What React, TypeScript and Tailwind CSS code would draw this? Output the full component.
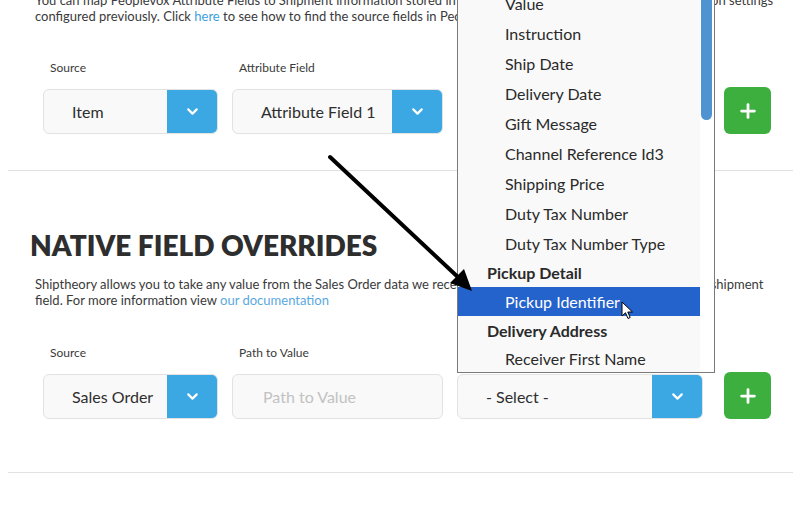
import React from "react";
import { ChevronDown, Plus } from "lucide-react";

type Opt = { label: string; group?: boolean; active?: boolean; h?: string };

const options: Opt[] = [
  { label: "Value" },
  { label: "Instruction" },
  { label: "Ship Date" },
  { label: "Delivery Date" },
  { label: "Gift Message" },
  { label: "Channel Reference Id3" },
  { label: "Shipping Price" },
  { label: "Duty Tax Number" },
  { label: "Duty Tax Number Type" },
  { label: "Pickup Detail", group: true, h: "h-[28px]" },
  { label: "Pickup Identifier", active: true, h: "h-[29px]" },
  { label: "Delivery Address", group: true, h: "h-[29px]" },
  { label: "Receiver First Name", h: "h-[28px]" },
];

function SelectBox({ value, width }: { value: string; width: string }) {
  return (
    <div className={`${width} h-[45px] flex rounded-[6px] border border-[#e2e2e2] bg-[#f9f9f9] overflow-hidden`}>
      <div className="flex-1 flex items-center pl-[28px] text-[16px] text-[#2e2e2e]">{value}</div>
      <div className="w-[51px] -my-px -mr-px bg-[#3ba8e3] flex items-center justify-center text-white">
        <ChevronDown size={17} strokeWidth={3} />
      </div>
    </div>
  );
}

function Field({ label, children }: { label: string; children: React.ReactNode }) {
  return (
    <div className="flex flex-col">
      <div className="pl-[7px] text-[12px] leading-4 text-[#3a3a3a] h-4">{label}</div>
      <div className="mt-[13px]">{children}</div>
    </div>
  );
}

function AddButton() {
  return (
    <div className="ml-[21px] -mt-[2px] w-[47px] h-[47px] rounded-[6px] bg-[#3daf3f] flex items-center justify-center text-white">
      <Plus size={22} strokeWidth={3} />
    </div>
  );
}

export default function App() {
  return (
    <div className="relative w-[793px] h-[511px] overflow-hidden bg-white text-[#333] font-['Lato',sans-serif]">
      <p className="-mt-2 pl-[35px] text-[13px] leading-4 text-[#3a3a3a] whitespace-nowrap">
        You can map Peoplevox Attribute Fields to Shipment information stored in Shiptheory. This overrides any Shipping Option settings
        <br />
        configured previously. Click <span className="text-[#3aa0e0]">here</span> to see how to find the source fields in Peoplevox.
      </p>

      <div className="mt-[36px] pl-[43px] flex items-end gap-[14px]">
        <Field label="Source">
          <SelectBox value="Item" width="w-[175px]" />
        </Field>
        <Field label="Attribute Field">
          <SelectBox value="Attribute Field 1" width="w-[211px]" />
        </Field>
        <Field label="">
          <SelectBox value="- Select -" width="w-[246px]" />
        </Field>
        <div className="-ml-[14px]">
          <AddButton />
        </div>
      </div>

      <div className="mt-[36px] ml-2 border-t border-[#e2e2e2]" />

      <h2 className="mt-[56px] pl-[30px] text-[28px] leading-9 font-extrabold text-[#2e2e2e]">
        NATIVE FIELD OVERRIDES
      </h2>
      <p className="mt-[13px] pl-[35px] text-[13px] leading-4 text-[#3a3a3a] whitespace-nowrap">
        Shiptheory allows you to take any value from the Sales Order data we receive from Peoplevox & map it to a Shiptheory shipment
        <br />
        field. For more information view <span className="text-[#5aa8e0]">our documentation</span>
      </p>

      <div className="mt-[37px] pl-[43px] flex items-end gap-[14px]">
        <Field label="Source">
          <SelectBox value="Sales Order" width="w-[175px]" />
        </Field>
        <Field label="Path to Value">
          <div className="w-[211px] h-[45px] rounded-[6px] border border-[#e2e2e2] bg-[#f9f9f9] flex items-center pl-[30px] text-[16px] text-[#c2c2c2]">
            Path to Value
          </div>
        </Field>
        <Field label="">
          <SelectBox value="- Select -" width="w-[246px]" />
        </Field>
        <div className="-ml-[14px]">
          <AddButton />
        </div>
      </div>

      <div className="mt-[53px] ml-2 border-t border-[#e2e2e2]" />

      {/* open dropdown list */}
      <div className="absolute left-[457px] top-[-12px] w-[258px] h-[385px] border border-[#7a7a7a] bg-white flex">
        <div className="w-[242px] bg-[#f9f9f9] text-[16px] text-[#2a2a2a]">
          {options.map((o) => (
            <div
              key={o.label}
              className={`${o.h ?? "h-[30px]"} flex items-center ${
                o.group ? "pl-[29px] font-bold" : "pl-[47px]"
              } ${o.active ? "bg-[#2563cc] text-white" : ""}`}
            >
              {o.label}
            </div>
          ))}
        </div>
        <div className="flex-1 pl-px pr-[2px]">
          <div className="w-[11px] h-[131px] rounded-b-full bg-[#4f94d0]" />
        </div>
      </div>

      {/* annotation arrow */}
      <svg className="absolute inset-0 pointer-events-none" width="793" height="511">
        <line x1="330" y1="157" x2="460" y2="279" stroke="#000" strokeWidth="4" strokeLinecap="round" />
        <polygon points="472,291 450,283 464,269" fill="#000" />
      </svg>

      {/* mouse cursor */}
      <svg className="absolute left-[621px] top-[301px] pointer-events-none" width="14" height="20" viewBox="0 0 14 20">
        <path d="M1 1 L1 15 L4.5 11.8 L7 17.5 L9.2 16.5 L6.8 11 L11.5 11 Z" fill="#fff" stroke="#000" strokeWidth="1" strokeLinejoin="round" />
      </svg>
    </div>
  );
}
